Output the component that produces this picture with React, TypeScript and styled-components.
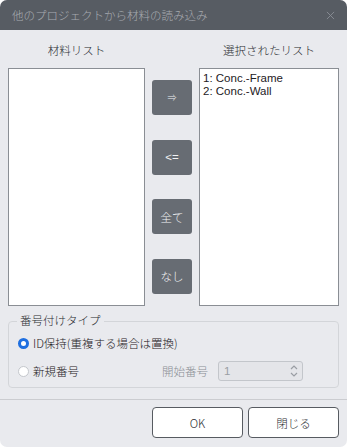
import React, { useState } from "react";
import styled, { createGlobalStyle } from "styled-components";

const GlobalStyle = createGlobalStyle`
  html, body {
    margin: 0;
    padding: 0;
    background: #ffffff;
  }
  * {
    box-sizing: border-box;
  }
`;

const FONT = `"Liberation Sans", "Noto Sans CJK JP", sans-serif`;
const CJK_FONT = `"Noto Sans CJK JP", "Liberation Sans", sans-serif`;

const materials = ["1: Conc.-Frame", "2: Conc.-Wall"];

export default function App() {
  const [mode, setMode] = useState<"keep" | "new">("keep");

  return (
    <>
      <GlobalStyle />
      <Dialog>
        <TitleBar>
          <span>他のプロジェクトから材料の読み込み</span>
          <CloseIcon viewBox="0 0 10 10">
            <path d="M1 1 L9 9 M9 1 L1 9" />
          </CloseIcon>
        </TitleBar>

        <Body>
          <ListsArea>
            <ListColumn>
              <ListLabel>材料リスト</ListLabel>
              <ListBox />
            </ListColumn>

            <MoveButtons>
              <MoveButton small>⇒</MoveButton>
              <MoveButton>&lt;=</MoveButton>
              <MoveButton>全て</MoveButton>
              <MoveButton>なし</MoveButton>
            </MoveButtons>

            <ListColumn>
              <ListLabel>選択されたリスト</ListLabel>
              <ListBox>
                {materials.map((m) => (
                  <ListItem key={m}>{m}</ListItem>
                ))}
              </ListBox>
            </ListColumn>
          </ListsArea>

          <GroupBox>
            <Legend>番号付けタイプ</Legend>
            <RadioRow>
              <RadioLabel onClick={() => setMode("keep")}>
                <RadioDot checked={mode === "keep"} />
                ID保持(重複する場合は置換)
              </RadioLabel>
            </RadioRow>
            <RadioRow>
              <RadioLabel onClick={() => setMode("new")}>
                <RadioDot checked={mode === "new"} />
                新規番号
              </RadioLabel>
              <StartGroup>
                <StartLabel>開始番号</StartLabel>
                <SpinBox>
                  <span>1</span>
                  <SpinArrows viewBox="0 0 8 16">
                    <path d="M1 6 L4 3 L7 6" />
                    <path d="M1 10 L4 13 L7 10" />
                  </SpinArrows>
                </SpinBox>
              </StartGroup>
            </RadioRow>
          </GroupBox>
        </Body>

        <Footer>
          <FooterButton>OK</FooterButton>
          <FooterButton>閉じる</FooterButton>
        </Footer>
      </Dialog>
    </>
  );
}

const Dialog = styled.div`
  width: 347px;
  height: 447px;
  background: #e9eaee;
  border-radius: 7px;
  overflow: hidden;
  display: flex;
  flex-direction: column;
  font-family: ${FONT};
  font-weight: 300;
  color: #2a2d31;
`;

const TitleBar = styled.div`
  height: 30px;
  flex-shrink: 0;
  background: #575c63;
  color: #a7abb1;
  font-size: 11.5px;
  display: flex;
  align-items: center;
  justify-content: space-between;
  padding: 0 12px 0 12px;
`;

const CloseIcon = styled.svg`
  width: 9px;
  height: 9px;
  fill: none;
  stroke: #8a8f96;
  stroke-width: 1;
`;

const Body = styled.div`
  flex: 1;
  padding: 0 8px;
  display: flex;
  flex-direction: column;
`;

const ListsArea = styled.div`
  display: grid;
  grid-template-columns: 137px 1fr 140px;
`;

const ListColumn = styled.div`
  display: flex;
  flex-direction: column;
`;

const ListLabel = styled.div`
  height: 38px;
  display: flex;
  align-items: center;
  justify-content: center;
  font-size: 11.5px;
  padding-top: 1px;
  color: #2a2d31;
`;

const ListBox = styled.div`
  height: 238px;
  background: #ffffff;
  border: 1px solid #8a8e94;
  padding: 3px 3px;
  display: flex;
  flex-direction: column;
`;

const ListItem = styled.div`
  font-size: 11.5px;
  line-height: 13px;
  color: #1e2024;
`;

const MoveButtons = styled.div`
  display: flex;
  flex-direction: column;
  align-items: center;
  gap: 24.5px;
  padding-top: 12px;
  margin-top: 38px;
`;

const MoveButton = styled.button<{ small?: boolean }>`
  width: 40px;
  height: 35px;
  border: none;
  border-radius: 3px;
  background: #676c73;
  color: #f1f2f4;
  font-family: ${FONT};
  font-weight: 300;
  font-size: ${(p) => (p.small ? "9px" : "11.5px")};
  padding: 0;
  display: flex;
  align-items: center;
  justify-content: center;
`;

const GroupBox = styled.fieldset`
  margin: 7px 0 0 0;
  padding: 4px 8px 6px 9px;
  border: 1px solid #d3d5d9;
  border-radius: 4px;
  display: flex;
  flex-direction: column;
  gap: 8px;
`;

const Legend = styled.legend`
  font-size: 11.5px;
  line-height: 16px;
  padding: 0 3px;
  margin-left: -1px;
  color: #2a2d31;
`;

const RadioRow = styled.div`
  height: 20px;
  display: flex;
  align-items: center;
  justify-content: space-between;
`;

const RadioLabel = styled.label`
  display: flex;
  align-items: center;
  gap: 4px;
  font-family: ${CJK_FONT};
  font-size: 11.5px;
  color: #1e2024;
  cursor: pointer;
`;

const RadioDot = styled.span<{ checked: boolean }>`
  width: 11px;
  height: 11px;
  border-radius: 50%;
  background: #ffffff;
  border: ${(p) => (p.checked ? "3px solid #1f6fe0" : "1px solid #c4c7cc")};
  flex-shrink: 0;
`;

const StartGroup = styled.div`
  display: flex;
  align-items: center;
  gap: 10px;
  margin-right: 27px;
`;

const StartLabel = styled.span`
  font-size: 11.5px;
  color: #8a8e94;
`;

const SpinBox = styled.div`
  width: 85px;
  height: 20px;
  border: 1px solid #c3c6cb;
  border-radius: 3px;
  background: #e4e5e9;
  color: #9a9ea4;
  font-size: 11.5px;
  display: flex;
  align-items: center;
  justify-content: space-between;
  padding: 0 4px 0 5px;
`;

const SpinArrows = styled.svg`
  width: 8px;
  height: 16px;
  fill: none;
  stroke: #9a9ea4;
  stroke-width: 1.2;
`;

const Footer = styled.div`
  height: 48px;
  flex-shrink: 0;
  border-top: 1px solid #cbccd0;
  display: flex;
  justify-content: flex-end;
  align-items: flex-start;
  gap: 5px;
  padding: 7px 8px 0 0;
`;

const FooterButton = styled.button`
  width: 91px;
  height: 31px;
  background: #ffffff;
  border: 1px solid #575b61;
  border-radius: 4px;
  font-family: ${CJK_FONT};
  font-weight: 300;
  font-size: 11.5px;
  color: #2a2d31;
  padding: 0;
`;
